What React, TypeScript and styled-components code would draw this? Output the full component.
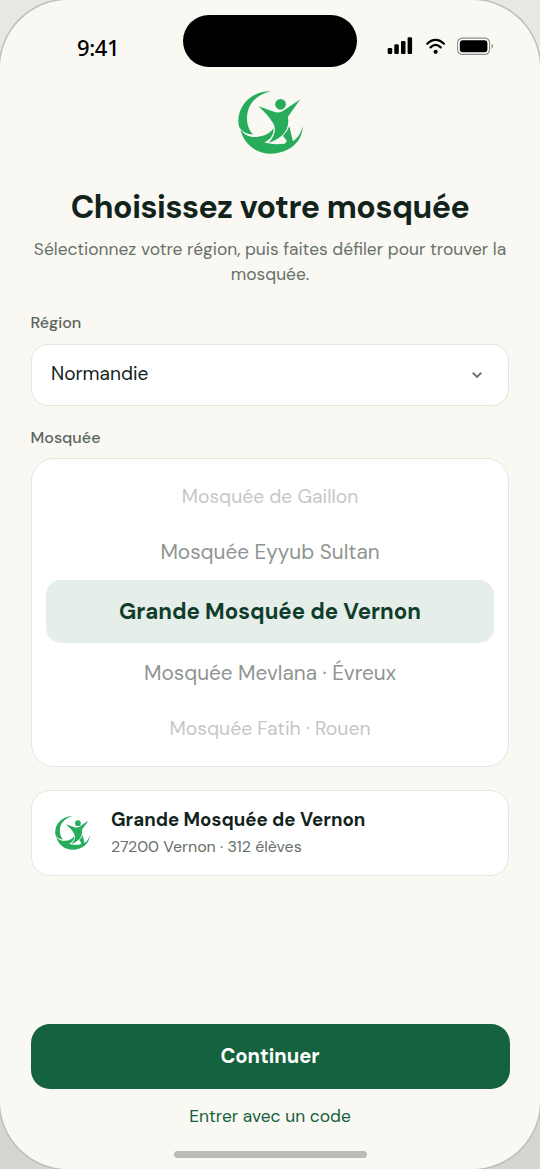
import React from "react";
import styled, { createGlobalStyle } from "styled-components";

const GlobalStyle = createGlobalStyle`
  * { box-sizing: border-box; }
  body { margin: 0; background: #dddcd6; }
  button { font: inherit; border: 0; background: none; padding: 0; cursor: pointer; }
`;

const Stage = styled.div`
  width: 540px;
  height: 1169px;
  overflow: hidden;
  background: linear-gradient(180deg, #e9e8e4 0%, #d5d4ce 100%);
  font-family: "DM Sans", Inter, "Liberation Sans", sans-serif;
`;

const Phone = styled.div`
  width: 540px;
  height: 1169px;
  display: flex;
  flex-direction: column;
  border-radius: 68px;
  background: #f9f8f2;
  box-shadow: 0 0 0 1.5px #bfbeb9;
`;

const StatusBar = styled.header`
  height: 67px;
  flex: none;
  display: grid;
  grid-template-columns: 183px 174px 1fr;
  padding-top: 15px;
`;

const Time = styled.div`
  padding: 17px 0 0 77px;
  font: 500 22px/30px "Noto Sans", sans-serif;
  letter-spacing: -0.35px;
  color: #000;
`;

const Island = styled.div`
  height: 51.5px;
  border-radius: 26px;
  background: #000;
`;

const StatusIcons = styled.div`
  padding: 22px 0 0 30px;
`;

const Content = styled.main`
  flex: 1;
  display: flex;
  flex-direction: column;
  padding: 24px 31px 0;
`;

const LogoWrap = styled.div`
  display: flex;
  justify-content: center;
  height: 63px;
`;

const Title = styled.h1`
  margin: 31px -20px 0;
  text-align: center;
  white-space: nowrap;
  font-size: 32px;
  line-height: 44px;
  font-weight: 700;
  letter-spacing: -0.45px;
  color: #12231b;
`;

const Subtitle = styled.p`
  margin: 8px -20px 0;
  text-align: center;
  font-size: 17.4px;
  line-height: 25px;
  color: #68706a;
`;

const Label = styled.div<{ $top: number }>`
  margin: ${(p) => p.$top}px 0 0 -0.5px;
  height: 20px;
  font-size: 16.1px;
  line-height: 20px;
  font-weight: 460;
  color: #5b645e;
`;

const Panel = styled.div`
  background: #fff;
  border: 1.5px solid #e6e5de;
`;

const Select = styled(Panel)`
  margin-top: 11px;
  height: 62px;
  border-radius: 17px;
  display: flex;
  align-items: center;
  justify-content: space-between;
  padding: 0 25px 3px 19px;
  font-size: 19.1px;
  color: #12231b;
`;

const Picker = styled(Panel)`
  margin-top: 10px;
  height: 309px;
  border-radius: 23px;
  padding: 10px 14px 9px;
  display: flex;
  flex-direction: column;
`;

const Option = styled.div<{ $height: number; $size: number; $color: string }>`
  height: ${(p) => p.$height}px;
  flex: none;
  display: flex;
  align-items: center;
  justify-content: center;
  font-size: ${(p) => p.$size}px;
  color: ${(p) => p.$color};
`;

const SelectedOption = styled(Option)`
  margin-top: 1px;
  border-radius: 15px;
  background: #e6eee9;
  font-weight: 680;
`;

const Card = styled(Panel)`
  margin-top: 23px;
  height: 86px;
  border-radius: 19px;
  display: flex;
  align-items: center;
  gap: 21px;
  padding: 0 23px;
`;

const CardName = styled.div`
  font-size: 18.7px;
  line-height: 26px;
  font-weight: 680;
  color: #12231b;
`;

const CardMeta = styled.div`
  margin-top: 1px;
  font-size: 16px;
  line-height: 26px;
  color: #68706a;
`;

const Footer = styled.footer`
  flex: none;
  display: flex;
  flex-direction: column;
  align-items: center;
  padding: 0 30.5px 11px;
`;

const PrimaryButton = styled.button`
  && {
    width: 100%;
    height: 65px;
    padding-bottom: 1px;
    border-radius: 19px;
    background: #15623f;
    color: #fff;
    font-size: 20.2px;
    font-weight: 700;
  }
`;

const LinkButton = styled.button`
  && {
    margin-top: 14px;
    height: 26px;
    font-size: 17.4px;
    font-weight: 450;
    color: #15623f;
  }
`;

const HomeIndicator = styled.div`
  margin-top: 22px;
  width: 193px;
  height: 7px;
  border-radius: 4px;
  background: #bbbab4;
`;

function Logo({ width, height }: { width: number; height: number }) {
  return (
    <svg width={width} height={height} viewBox="38 32 194 189" preserveAspectRatio="none" fill="#27ac5c" aria-hidden="true">
      <path d="M136 33C80 32 39 73 39 122C39 130 40 137 43 142C50 153 64 162 83 162C68 148 61 121 67 94C75 62 99 42 136 33Z" />
      <path d="M45 146C56 164 73 172 93 170C116 168 135 159 144 144C145 163 135 178 116 186C128 191 152 193 178 190L184 182L172 166C181 158 187 149 191 137L202 183C216 173 226 159 231 138C231 184 190 220 136 220C91 220 54 190 45 146Z" />
      <path d="M99 78L150 96C163 98 173 92 181 86L224 57L187 109C193 145 175 172 130 187C149 166 153 144 142 127C132 110 116 94 99 78Z" />
      <circle cx="165" cy="72" r="16" />
    </svg>
  );
}

function StatusGlyphs() {
  return (
    <svg width="108" height="20" viewBox="0 0 108 20" aria-hidden="true">
      <rect x="0.7" y="11" width="4.5" height="6" rx="1.2" />
      <rect x="7.3" y="7.3" width="4.5" height="9.7" rx="1.2" />
      <rect x="14" y="4" width="4.5" height="13" rx="1.2" />
      <rect x="20.6" y="0.3" width="4.5" height="16.7" rx="1.2" />
      <g fill="none" stroke="#000" strokeWidth="2.2" strokeLinecap="round">
        <path d="M40.3 6.8C45.2 1.5 52 1.5 56.9 6.8" />
        <path d="M43.5 10.4C46.7 7.2 50.5 7.2 53.7 10.4" />
      </g>
      <circle cx="48.6" cy="14.8" r="2.1" />
      <rect x="70.6" y="1.1" width="32" height="16.3" rx="4.8" fill="#fff" stroke="#8c8c8a" strokeWidth="1.1" />
      <rect x="72.8" y="3.2" width="27.6" height="12.1" rx="3" />
      <path d="M104.6 7v4.4c1-.4 1.4-1.3 1.4-2.2s-.4-1.8-1.4-2.2z" fill="#8c8c8a" />
    </svg>
  );
}

export default function App() {
  return (
    <Stage>
      <GlobalStyle />
      <Phone>
        <StatusBar>
          <Time>9:41</Time>
          <Island />
          <StatusIcons>
            <StatusGlyphs />
          </StatusIcons>
        </StatusBar>
        <Content>
          <LogoWrap>
            <Logo width={65} height={63} />
          </LogoWrap>
          <Title>Choisissez votre mosquée</Title>
          <Subtitle>
            Sélectionnez votre région, puis faites défiler pour trouver la
            <br />
            mosquée.
          </Subtitle>
          <Label $top={26}>Région</Label>
          <Select>
            Normandie
            <svg width="12" height="12" viewBox="0 0 12 12" fill="none" stroke="#68736c" strokeWidth="2" aria-hidden="true">
              <path d="M1.8 4.8L6 8.9L10.2 4.8" />
            </svg>
          </Select>
          <Label $top={22}>Mosquée</Label>
          <Picker>
            <Option $height={54} $size={19.3} $color="#c5c8c5">Mosquée de Gaillon</Option>
            <Option $height={56} $size={20.75} $color="#8f9591">Mosquée Eyyub Sultan</Option>
            <SelectedOption $height={63} $size={22.2} $color="#0f3d2c">Grande Mosquée de Vernon</SelectedOption>
            <Option $height={58} $size={20.75} $color="#8f9591">Mosquée Mevlana · Évreux</Option>
            <Option $height={54} $size={19.4} $color="#c5c8c5">Mosquée Fatih · Rouen</Option>
          </Picker>
          <Card>
            <Logo width={35} height={34} />
            <div>
              <CardName>Grande Mosquée de Vernon</CardName>
              <CardMeta>27200 Vernon · 312 élèves</CardMeta>
            </div>
          </Card>
        </Content>
        <Footer>
          <PrimaryButton>Continuer</PrimaryButton>
          <LinkButton>Entrer avec un code</LinkButton>
          <HomeIndicator />
        </Footer>
      </Phone>
    </Stage>
  );
}
